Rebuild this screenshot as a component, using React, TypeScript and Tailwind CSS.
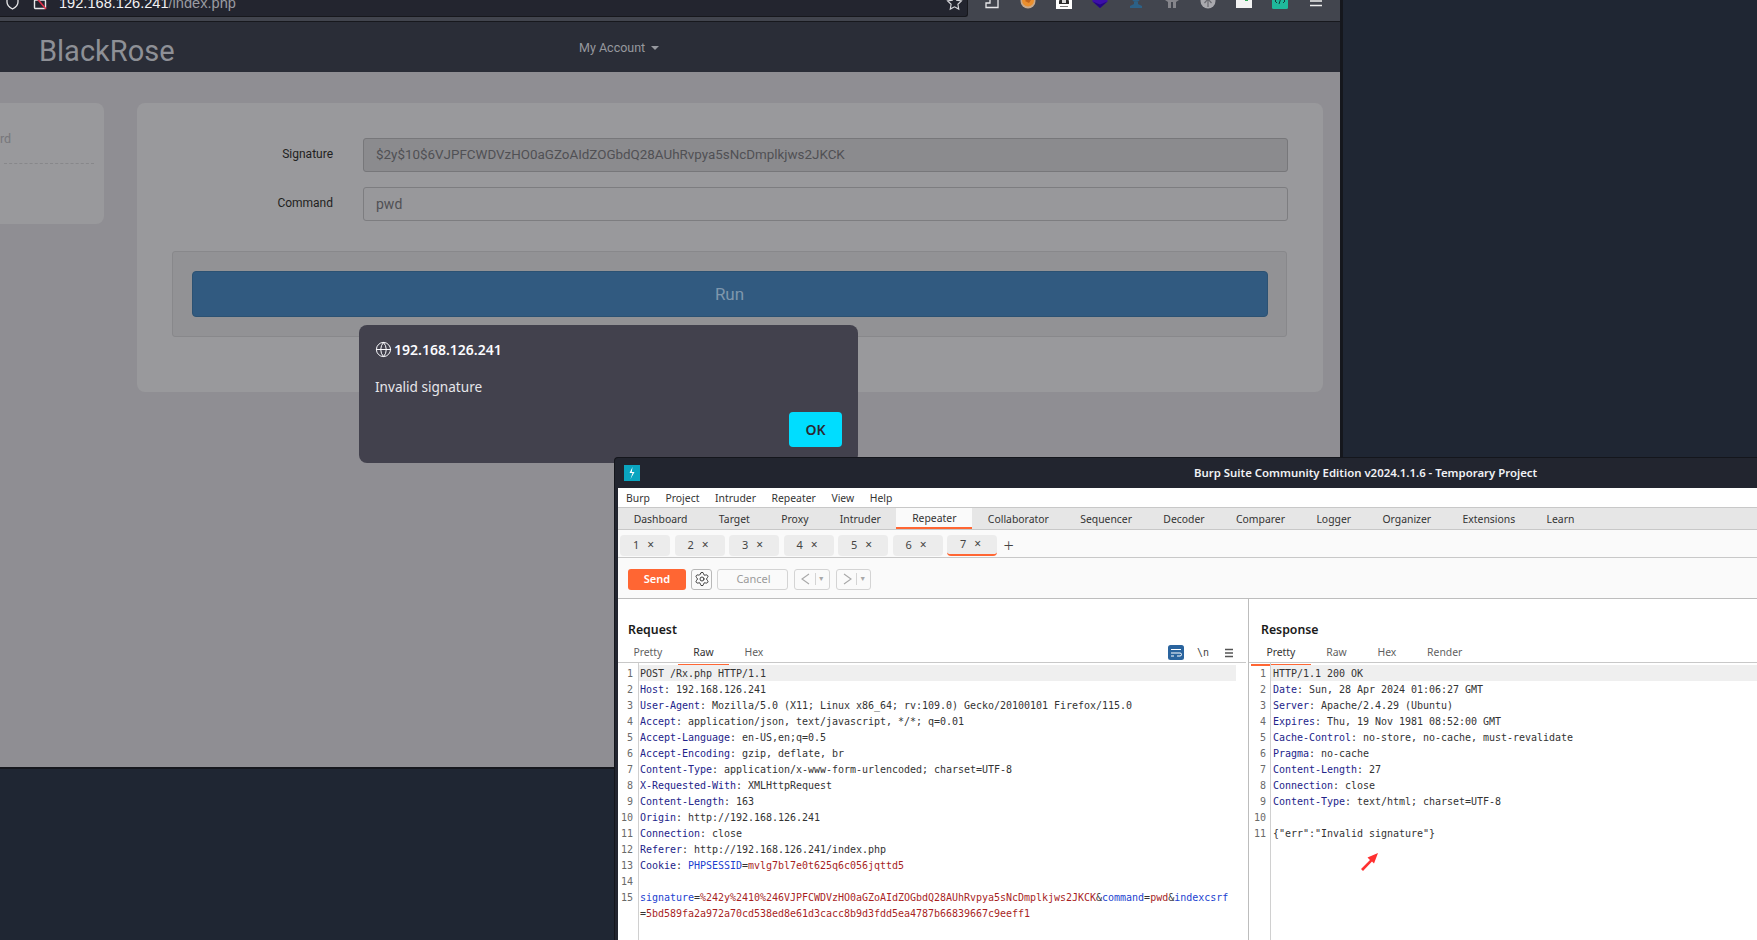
import { Globe, Settings } from "lucide-react";

const sans = "font-['Noto_Sans',sans-serif]";
const mono = "font-['DejaVu_Sans_Mono',monospace]";

const menuItems = ["Burp", "Project", "Intruder", "Repeater", "View", "Help"];
const mainTabs = ["Dashboard", "Target", "Proxy", "Intruder", "Repeater", "Collaborator", "Sequencer", "Decoder", "Comparer", "Logger", "Organizer", "Extensions", "Learn"];

type Part = { t: string; c?: "key" | "val" | "name" | "red" };

const partClass = {
  key: "text-[#23248a]",
  val: "text-[#333333]",
  name: "text-[#1c3fd0]",
  red: "text-[#a81f1f]",
};

const h = (key: string, value: string): Part[] => [{ t: key, c: "key" }, { t: ": " + value, c: "val" }];

const requestLines: { n?: number; parts: Part[] }[] = [
  { n: 1, parts: [{ t: "POST /Rx.php HTTP/1.1", c: "val" }] },
  { n: 2, parts: h("Host", "192.168.126.241") },
  { n: 3, parts: h("User-Agent", "Mozilla/5.0 (X11; Linux x86_64; rv:109.0) Gecko/20100101 Firefox/115.0") },
  { n: 4, parts: h("Accept", "application/json, text/javascript, */*; q=0.01") },
  { n: 5, parts: h("Accept-Language", "en-US,en;q=0.5") },
  { n: 6, parts: h("Accept-Encoding", "gzip, deflate, br") },
  { n: 7, parts: h("Content-Type", "application/x-www-form-urlencoded; charset=UTF-8") },
  { n: 8, parts: h("X-Requested-With", "XMLHttpRequest") },
  { n: 9, parts: h("Content-Length", "163") },
  { n: 10, parts: h("Origin", "http://192.168.126.241") },
  { n: 11, parts: h("Connection", "close") },
  { n: 12, parts: h("Referer", "http://192.168.126.241/index.php") },
  {
    n: 13,
    parts: [
      { t: "Cookie", c: "key" },
      { t: ": ", c: "val" },
      { t: "PHPSESSID", c: "name" },
      { t: "=", c: "val" },
      { t: "mvlg7bl7e0t625q6c056jqttd5", c: "red" },
    ],
  },
  { n: 14, parts: [] },
  {
    n: 15,
    parts: [
      { t: "signature", c: "name" },
      { t: "=", c: "val" },
      { t: "%242y%2410%246VJPFCWDVzHO0aGZoAIdZOGbdQ28AUhRvpya5sNcDmplkjws2JKCK", c: "red" },
      { t: "&", c: "val" },
      { t: "command", c: "name" },
      { t: "=", c: "val" },
      { t: "pwd", c: "red" },
      { t: "&", c: "val" },
      { t: "indexcsrf", c: "name" },
    ],
  },
  {
    parts: [
      { t: "=", c: "val" },
      { t: "5bd589fa2a972a70cd538ed8e61d3cacc8b9d3fdd5ea4787b66839667c9eeff1", c: "red" },
    ],
  },
];

const responseLines: { n?: number; parts: Part[] }[] = [
  { n: 1, parts: [{ t: "HTTP/1.1 200 OK", c: "val" }] },
  { n: 2, parts: h("Date", "Sun, 28 Apr 2024 01:06:27 GMT") },
  { n: 3, parts: h("Server", "Apache/2.4.29 (Ubuntu)") },
  { n: 4, parts: h("Expires", "Thu, 19 Nov 1981 08:52:00 GMT") },
  { n: 5, parts: h("Cache-Control", "no-store, no-cache, must-revalidate") },
  { n: 6, parts: h("Pragma", "no-cache") },
  { n: 7, parts: h("Content-Length", "27") },
  { n: 8, parts: h("Connection", "close") },
  { n: 9, parts: h("Content-Type", "text/html; charset=UTF-8") },
  { n: 10, parts: [] },
  { n: 11, parts: [{ t: '{"err":"Invalid signature"}', c: "val" }] },
];

const BurpLogo = () => (
  <svg width="16" height="16" viewBox="0 0 16 16">
    <rect width="16" height="16" fill="#0aa5c0" />
    <path d="M8.5 2 L5.5 8 H8.5 L6.5 14 L10.5 7 H7.8 Z" fill="#ffffff" />
  </svg>
);

const ToolbarIcons = () => (
  <div className="flex items-center gap-[20px] -mt-[7px]">
    <svg width="16" height="16" viewBox="0 0 16 16" fill="none" stroke="#e8e8ea" strokeWidth="1.3">
      <path d="M5 1h9v13.5H2V10h4V6H3" />
    </svg>
    <svg width="16" height="16" viewBox="0 0 16 16">
      <circle cx="8" cy="8" r="7.5" fill="#c9a98a" />
      <circle cx="8" cy="7.5" r="6" fill="#ea8f2e" />
      <path d="M5 8l3-3 3 2-2 3Z" fill="#c4661c" />
    </svg>
    <svg width="16" height="16" viewBox="0 0 16 16">
      <rect width="16" height="16" fill="#ffffff" />
      <path d="M3 9c0-6 10-6 10 0v2H3Z" fill="#2a2a2a" />
      <rect x="6" y="6" width="4" height="4" fill="#d8d8d8" />
      <rect x="4" y="13" width="8" height="1" fill="#777777" />
    </svg>
    <svg width="16" height="16" viewBox="0 0 16 16">
      <path d="M8 0 16 8 8 15 0 8Z" fill="#3c0fa8" />
      <path d="M0.5 8.5 8 11.5 15.5 8.5 8 15Z" fill="#240680" />
    </svg>
    <svg width="16" height="16" viewBox="0 0 16 16" fill="#2c6187">
      <circle cx="8" cy="5" r="4" />
      <path d="M6 9h4v2l4 2v2H2v-2l4-2Z" />
    </svg>
    <svg width="16" height="16" viewBox="0 0 16 16" fill="#85858b">
      <path d="M1 7 5 4l3 2 3-2 4 3-3 2v6H9V9H7v6H4V9Z" />
    </svg>
    <svg width="16" height="16" viewBox="0 0 16 16">
      <circle cx="8" cy="8" r="7.5" fill="#a9a9ae" />
      <path d="M8 2v12M4.5 10 8 6l3.5 4" stroke="#6a6a70" strokeWidth="1.2" fill="none" />
    </svg>
    <svg width="16" height="16" viewBox="0 0 16 16">
      <path d="M0 4 3 1h13v14H0Z" fill="#f2f2f2" />
      <rect x="9" y="5" width="3" height="3" fill="#2faa55" />
    </svg>
    <svg width="16" height="16" viewBox="0 0 16 16">
      <rect width="16" height="16" rx="1.5" fill="#1fb89a" />
      <path d="M5 6 3 8l2 2M11 6l2 2-2 2M9 5 7 11" stroke="#173b38" strokeWidth="1" fill="none" />
    </svg>
    <svg width="16" height="16" viewBox="0 0 16 16" stroke="#eeeeee" strokeWidth="1.4">
      <path d="M2 3.5h12M2 8h12M2 12.5h12" />
    </svg>
  </div>
);

const BrowserWindow = () => (
  <div className="absolute top-0 left-0 flex h-[767px] w-[1340px] flex-col">
    <div className="flex h-[22px] shrink-0 items-start justify-between overflow-hidden border-b border-[#17181d] bg-[#42454e]">
      <div className="flex h-[17px] w-[968px] items-start overflow-hidden rounded-br-[3px] border-r border-b border-[#17181d] bg-[#23252f]">
        <svg className="ml-[5px] -mt-[6px]" width="15" height="16" viewBox="0 0 15 16" fill="none" stroke="#e8e8ea" strokeWidth="1.3">
          <path d="M7.5 1 13 3v5c0 3-2.5 5.5-5.5 7C4.5 13.5 2 11 2 8V3Z" />
        </svg>
        <svg className="ml-[13px] -mt-[6px]" width="14" height="16" viewBox="0 0 14 16" fill="none">
          <rect x="1.5" y="6" width="11" height="8.5" rx="1" stroke="#e8e8ea" strokeWidth="1.4" />
          <path d="M1 1 13 15" stroke="#e0304a" strokeWidth="1.6" />
        </svg>
        <div className="ml-[12px] -mt-[7px] whitespace-nowrap font-['Liberation_Sans',sans-serif] text-[14.6px] leading-[20px] text-[#f2f2f4]">
          192.168.126.241<span className="text-[#9a9ba1]">/index.php</span>
        </div>
        <div className="ml-auto mr-[4px] -mt-[6px] text-[#d8d8dc]">
          <svg width="17" height="17" viewBox="0 0 24 24" fill="none" stroke="currentColor" strokeWidth="1.6">
            <path d="M12 2.5l3 6.2 6.8 1-5 4.8 1.2 6.8-6-3.2-6 3.2 1.2-6.8-5-4.8 6.8-1z" />
          </svg>
        </div>
      </div>
      <div className="pr-[16px]">
        <ToolbarIcons />
      </div>
    </div>

    <div className="relative flex h-[50px] shrink-0 items-center bg-[#2a2d37] pl-[39px]">
      <div className="mt-[9px] w-[540px] font-['Roboto',sans-serif] text-[29px] leading-none text-[#8e9096]">BlackRose</div>
      <div className="mt-[2px] flex items-center gap-[6px] font-['Roboto',sans-serif] text-[12.5px] text-[#96989e]">
        My Account
        <span className="h-0 w-0 border-x-[4px] border-t-[4px] border-x-transparent border-t-[#96989e]" />
      </div>
    </div>

    <div className="flex flex-1 items-start gap-[33px] bg-[#8f8e93] pt-[31px]">
      <div className="flex h-[121px] w-[104px] shrink-0 flex-col rounded-r-[8px] bg-[#99999c] pt-[28px] font-['Roboto',sans-serif] text-[12.5px] text-[#77777b]">
        <div className="leading-[16px]">rd</div>
        <div className="mt-[16px] ml-[4px] w-[90px] border-t border-dashed border-[#87878a]" />
      </div>

      <div className="flex h-[289px] w-[1186px] shrink-0 flex-col rounded-[8px] bg-[#99999c] pt-[35px] font-['Roboto',sans-serif]">
        <div className="flex items-center">
          <div className="-mt-[2px] w-[196px] text-right text-[12px] text-[#1f1f21]">Signature</div>
          <div className="ml-[30px] flex h-[34px] w-[925px] items-center rounded-[3px] border border-[#77777a] bg-[#8b8b8e] pt-[1px] pl-[12px] text-[13.4px] text-[#505054]">
            $2y$10$6VJPFCWDVzHO0aGZoAIdZOGbdQ28AUhRvpya5sNcDmplkjws2JKCK
          </div>
        </div>
        <div className="mt-[15px] flex items-center">
          <div className="-mt-[2px] w-[196px] text-right text-[12px] text-[#1f1f21]">Command</div>
          <div className="ml-[30px] flex h-[34px] w-[925px] items-center rounded-[3px] border border-[#7d7d80] bg-[#98989b] pl-[12px] text-[14px] text-[#505054]">
            pwd
          </div>
        </div>
        <div className="mt-[30px] ml-[35px] flex h-[86px] w-[1115px] items-center justify-center rounded-[3px] border border-[#88888b] bg-[#929295]">
          <div className="flex h-[46px] w-[1076px] items-center justify-center rounded-[4px] border border-[#2c5273] bg-[#315a80] pt-[1px] text-[17px] text-[#7f97ad]">
            Run
          </div>
        </div>
      </div>
    </div>
  </div>
);

const AlertDialog = () => (
  <div className={`absolute top-[325px] left-[359px] flex h-[138px] w-[499px] flex-col rounded-[8px] bg-[#42414d] px-[16px] pt-[14px] ${sans}`}>
    <div className="flex h-[20px] items-center gap-[2px] text-[14px] font-semibold text-[#fbfbfe]">
      <Globe size={17} strokeWidth={1.4} />
      192.168.126.241
    </div>
    <div className="mt-[18px] text-[13.6px] leading-[20px] text-[#e6e6ea]">Invalid signature</div>
    <div className="mt-[15px] flex justify-end">
      <div className="flex h-[35px] w-[53px] items-center justify-center rounded-[4px] bg-[#00ddff] text-[14px] font-semibold text-[#2b2a33]">
        OK
      </div>
    </div>
  </div>
);

const CodeLine = ({ n, parts, active, width }: { n?: number; parts: Part[]; active?: boolean; width: string }) => (
  <div className={`flex h-[16px] items-center ${width}`}>
    <div className="w-[20px] shrink-0 pr-[5px] text-right text-[#6a6a6a]">{n}</div>
    <div className={`flex h-full flex-1 items-center whitespace-pre pl-[2px] tracking-[-0.02px] ${active ? "bg-[#efefef]" : ""}`}>
      {parts.map((p, i) => (
        <span key={i} className={p.c ? partClass[p.c] : ""}>
          {p.t}
        </span>
      ))}
    </div>
  </div>
);

const SubTabs = ({ items, active }: { items: string[]; active: string }) => (
  <div className="flex h-[25px] items-center pt-[1px] text-[10.4px]">
    {items.map((t) => (
      <div key={t} className={`flex h-full items-center border-b-[2px] px-[15.4px] ${t === active ? "border-[#ff6633] text-[#333333]" : "border-transparent text-[#5f5f5f]"}`}>
        {t}
      </div>
    ))}
  </div>
);

const NavButton = ({ d }: { d: string }) => (
  <div className="flex h-[21px] w-[35.5px] items-center justify-center rounded-[3px] border border-[#d4d4d4] text-[#a8a8a8]">
    <svg width="14" height="14" viewBox="0 0 14 14" fill="none" stroke="currentColor" strokeWidth="1.1">
      <path d={d} />
    </svg>
    <span className="mx-[2px] h-[12px] border-l border-[#d4d4d4]" />
    <span className="text-[7px]">▼</span>
  </div>
);

const BurpWindow = () => (
  <div className={`absolute top-[457px] left-[614px] flex h-[483px] w-[1143px] flex-col overflow-hidden rounded-tl-[4px] border-t border-l border-[#14161c] bg-[#22252f] ${sans}`}>
    <div className="relative flex h-[30px] shrink-0 items-center pl-[9px]">
      <BurpLogo />
      <div className="absolute left-[579px] text-[11.4px] font-semibold text-[#f0f2f5]">Burp Suite Community Edition v2024.1.1.6 - Temporary Project</div>
    </div>
    <div className="ml-[3px] flex min-h-0 flex-1 flex-col bg-white">
      <div className="flex h-[20px] shrink-0 items-center gap-[15.6px] border-b border-[#c8c8c8] pt-[2px] pl-[8px] text-[10.4px] text-[#333333]">
        {menuItems.map((m) => (
          <span key={m}>{m}</span>
        ))}
      </div>
      <div className="flex h-[22px] shrink-0 border-b border-[#c8c8c8] bg-[#e6e6e6] text-[10.4px] text-[#333333]">
        {mainTabs.map((t) => (
          <div key={t} className={`flex h-full items-center px-[15.7px] pt-[2px] ${t === "Repeater" ? "border-b-[2px] border-[#ff6633] bg-[#fafafa]" : ""}`}>
            {t}
          </div>
        ))}
      </div>
      <div className="flex h-[28px] shrink-0 items-center gap-[4.5px] border-b border-[#c8c8c8] bg-[#fafafa] pt-[3px] pl-[2px] text-[11px] text-[#444444]">
        {["1", "2", "3", "4", "5", "6", "7"].map((n) => (
          <div key={n} className={`flex h-[21px] w-[50px] items-center justify-center gap-[8px] rounded-[4px] bg-[#ececec] pr-[3px] ${n === "7" ? "border-b-[2px] border-[#ff6633]" : ""}`}>
            <span>{n}</span>
            <span className="text-[12px]">×</span>
          </div>
        ))}
        <span className="ml-[2px] text-[18px] leading-none font-light text-[#444444]">+</span>
      </div>
      <div className="flex h-[41px] shrink-0 items-center border-b-[1px] border-[#bdbdbd] bg-[#fafafa] pt-[2px] pl-[10px] text-[11px]">
        <div className="flex h-[21px] w-[58px] items-center justify-center rounded-[3px] bg-[#ff6633] font-semibold text-white">Send</div>
        <div className="ml-[5px] flex h-[21px] w-[21px] items-center justify-center rounded-[3px] border border-[#b8b8b8] text-[#333333]">
          <Settings size={16} strokeWidth={1.4} />
        </div>
        <div className="ml-[5px] flex h-[21px] w-[71px] items-center justify-center rounded-[3px] border border-[#d4d4d4] pl-[2px] text-[#9a9a9a]">Cancel</div>
        <div className="ml-[6px]">
          <NavButton d="M10 2 3 7l7 5" />
        </div>
        <div className="ml-[6px]">
          <NavButton d="M4 2l7 5-7 5" />
        </div>
      </div>

      <div className="flex min-h-0 flex-1">
        <div className="flex w-[630px] shrink-0 flex-col">
          <div className="flex h-[44px] shrink-0 items-end pb-[4px] pl-[10px] text-[12.3px] font-semibold text-[#1a1a1a]">Request</div>
          <div className="mr-[2px] flex h-[20px] shrink-0 items-center justify-between border-b border-[#c8c8c8]">
            <div className="-mb-[1px]">
              <SubTabs items={["Pretty", "Raw", "Hex"]} active="Raw" />
            </div>
            <div className="flex items-center pr-[12px] text-[#444444]">
              <svg width="16" height="15" viewBox="0 0 16 15">
                <rect width="16" height="15" rx="2.5" fill="#2a649e" />
                <path d="M3 4.5h10M3 8h9a1.5 1.5 0 0 1 0 3H9M3 11h3" stroke="#ffffff" strokeWidth="1" fill="none" />
              </svg>
              <span className={`ml-[13px] text-[10px] ${mono}`}>\n</span>
              <svg className="ml-[15px]" width="10" height="10" viewBox="0 0 10 10" stroke="#555555" strokeWidth="1.3">
                <path d="M1 1.5h8M1 5h8M1 8.5h8" />
              </svg>
            </div>
          </div>
          <div className={`relative flex-1 pt-[2px] text-[10px] ${mono}`}>
            <div className="absolute top-0 bottom-0 left-[20px] border-l border-[#d0d0d0]" />
            {requestLines.map((l, i) => (
              <CodeLine key={i} n={l.n} parts={l.parts} active={i === 0} width="w-[618px]" />
            ))}
          </div>
        </div>
        <div className="flex min-w-0 flex-1 flex-col border-l border-[#bdbdbd]">
          <div className="flex h-[44px] shrink-0 items-end pb-[4px] pl-[12px] text-[12.3px] font-semibold text-[#1a1a1a]">Response</div>
          <div className="flex h-[20px] shrink-0 items-center border-b border-[#c8c8c8] pl-[2px]">
            <div className="-mb-[1px]">
              <SubTabs items={["Pretty", "Raw", "Hex", "Render"]} active="Pretty" />
            </div>
          </div>
          <div className={`relative flex-1 pt-[2px] text-[10px] ${mono}`}>
            <div className="absolute top-0 bottom-0 left-[21px] border-l border-[#d0d0d0]" />
            {responseLines.map((l, i) => (
              <div key={i} className="pl-[2px]">
                <CodeLine n={l.n} parts={l.parts} active={i === 0} width="w-full" />
              </div>
            ))}
            <svg className="absolute top-[189px] left-[111px]" width="20" height="20" viewBox="0 0 20 20">
              <path d="M1 17 L10 8 L7.5 5.5 L18 1 L14 11.5 L12 9.5 L3 19Z" fill="#ff3030" />
            </svg>
          </div>
        </div>
      </div>
    </div>
  </div>
);

export default function App() {
  return (
    <div className="relative h-[940px] w-[1757px] overflow-hidden bg-[#1f2633]">
      <div className="absolute top-0 left-[1340px] h-[767px] w-[3px] bg-[#15171d]" />
      <div className="absolute top-[767px] left-0 h-[2px] w-[1343px] bg-[#15171d]" />
      <BrowserWindow />
      <AlertDialog />
      <BurpWindow />
    </div>
  );
}
